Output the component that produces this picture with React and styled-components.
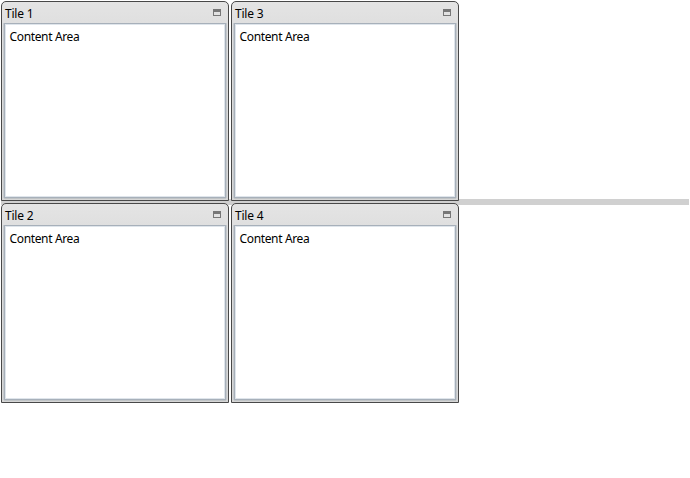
import React from "react";
import styled, { createGlobalStyle } from "styled-components";

const GlobalStyle = createGlobalStyle`
  * { box-sizing: border-box; }
  body { margin: 0; background: #fff; overflow: hidden; }
`;

const Page = styled.div`
  position: relative;
  width: 690px;
  height: 478px;
  padding: 1px;
  color: #000;
  font: 12px/16px "Noto Sans", "Open Sans", sans-serif;
`;

const Splitter = styled.div`
  position: absolute;
  top: 199px;
  left: 1px;
  right: 1px;
  height: 6px;
  background: #d0d0d0;
`;

const TileGrid = styled.main`
  position: relative;
  display: grid;
  grid-template-columns: 228px 228px;
  grid-template-rows: 200px 200px;
  grid-auto-flow: column;
  gap: 2px;
`;

const Tile = styled.section`
  display: flex;
  flex-direction: column;
  padding: 0 2px 2px;
  border: 1px solid #484848;
  border-radius: 5px 5px 0 0;
  background: linear-gradient(#e4e4e4, #dfdfdf 22px, #d6d6d6);
`;

const Header = styled.header`
  display: flex;
  flex: 0 0 21px;
  align-items: center;
  justify-content: space-between;
  padding: 3px 5px 0 1px;
`;

const Label = styled.span`
  display: block;
  width: max-content;
  white-space: nowrap;
  letter-spacing: ${(p) => p.$spacing || "-0.2px"};
`;

const Maximize = styled.svg`
  display: block;
  width: 8px;
  height: 7px;
  margin-bottom: 3px;
`;

const Content = styled.div`
  flex: 1;
  padding: 5px 4px 0 4.5px;
  border: 1px solid #a7b0ba;
  box-shadow: inset 0 0 0 1px #dfe5eb, 0 1px 0 #c0c4c6, -1px 0 0 #c5c9cc, 1px 0 0 #c5c9cc;
  background: #fff;
`;

const tiles = ["Tile 1", "Tile 2", "Tile 3", "Tile 4"];

export default function App() {
  return (
    <>
      <GlobalStyle />
      <Page>
        <Splitter />
        <TileGrid>
          {tiles.map((title) => (
            <Tile key={title}>
              <Header>
                <Label>{title}</Label>
                <Maximize viewBox="0 0 8 7" shapeRendering="crispEdges">
                  <path fill="#777" d="M0 0h8v7H0zM1 3v3h6V3z" fillRule="evenodd" />
                </Maximize>
              </Header>
              <Content>
                <Label $spacing="-0.35px">Content Area</Label>
              </Content>
            </Tile>
          ))}
        </TileGrid>
      </Page>
    </>
  );
}
